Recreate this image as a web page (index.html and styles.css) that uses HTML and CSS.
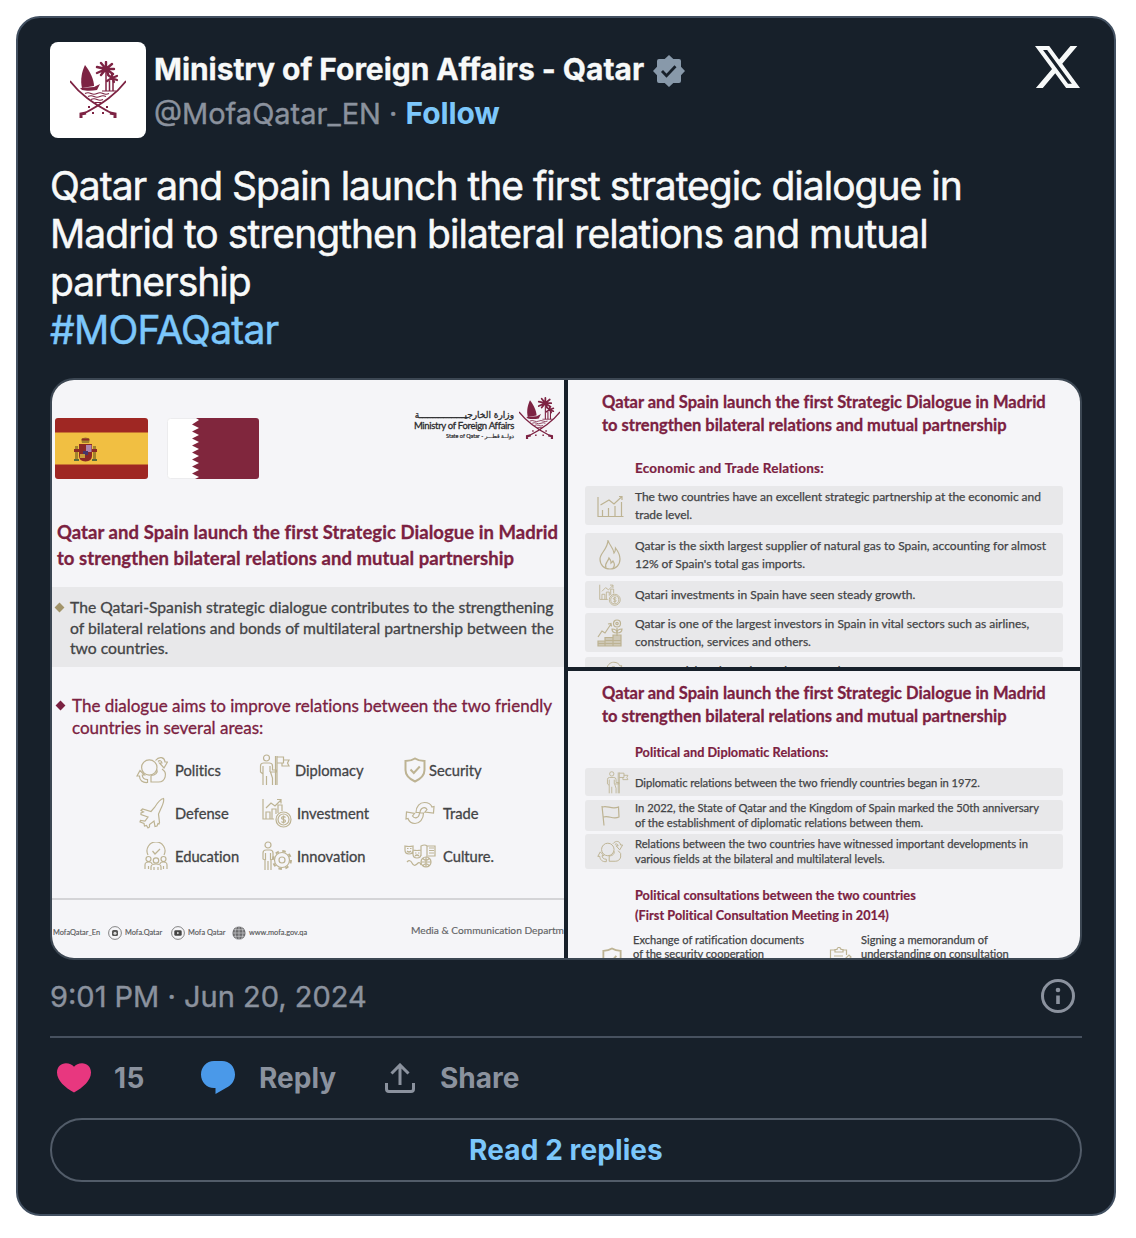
FILE: index.html
```
<!DOCTYPE html>
<html lang="en">
<head>
    <meta charset="UTF-8">
    <meta name="viewport" content="width=device-width, initial-scale=1.0">
    <title>Ministry of Foreign Affairs - Qatar</title>
    <link rel="stylesheet" href="styles.css">
</head>
<body>

<!-- shared icons -->
<svg class="sprite" aria-hidden="true">
    <symbol id="emblem" viewBox="0 0 56 58">
        <path fill="#7d2343" d="M15 4c5 6 9 15 9 21l-12 2c-2-8 0-17 3-23z"/>
        <path fill="#7d2343" d="M10 27l14-1 6-3-3 6c-5 1-11 1-15 0z"/>
        <path fill="none" stroke="#7d2343" stroke-width="2.400" stroke-linecap="round" d="M36 8l-9 4M36 8l-9-2M36 8l-5-6M36 8V1M36 8l6-5M36 8l8 0M36 8l7 5M36 8l-5 6M36 8l2 5"/>
        <path fill="none" stroke="#7d2343" stroke-width="1.500" d="M36 10v20M43 20v10M39.500 20v10"/>
        <path fill="none" stroke="#7d2343" stroke-width="2.200" stroke-linecap="round" d="M42 17l-5 3M42 17l-4-3M42 17v-4M42 17l5-2M42 17l5 2M42 17l2 4"/>
        <path fill="none" stroke="#7d2343" stroke-width="1.100" d="M32 30h14M15 32.500q3-1.500 6 0t6 0 6 0 6 0M18 35.500q3-1.500 6 0t6 0 6 0M21 38.500q3-1.500 6 0t6 0M25 41.500h6"/>
        <path fill="none" stroke="#7d2343" stroke-width="1.700" d="M0 20c10 13 22 22 43 33M56 20C46 33 34 42 13 53"/>
        <path fill="none" stroke="#7d2343" stroke-width="3" d="M40 52l5 1v4M16 52l-5 1v4"/>
        <path fill="#7d2343" d="M18 45h2v2h-2zM36 45h2v2h-2zM22 51h2v2h-2zM32 51h2v2h-2z"/>
    </symbol>
    <symbol id="politics" viewBox="0 0 32 28">
        <circle cx="13.300" cy="11.500" r="7.700"/>
        <path d="M15 19.500v6.500h7.500a7 7 0 0 0 3.500-13M20.800 13.500c1.500 3-1.500 6-5.800 6"/>
        <path d="M19.500 4.500c4-5 9-3 9.500 1.500h2.500l-3.500 6-4.500-5H26c-.5-2.500-2.500-3-4-1.500M1 20l3-5.500L8.500 19H6.300c0 3 2 4.500 5.200 4.500V26.500C6.500 27 3.500 24 3.500 20z"/>
    </symbol>
    <symbol id="diplomacy" viewBox="0 0 31 32">
        <circle cx="7.500" cy="4" r="3"/>
        <path d="M4 31V20l-2.500-2v-6q0-3 3-3h6q3 0 3 3v4h4v2h-6l2 6v7M4 12v8M7.500 31v-9M11 12v6M16.500 2v29M18 2v29M18 3h6.500v6H18M24.500 6H30l-1.500 3 1.500 3h-7V9"/>
    </symbol>
    <symbol id="shield" viewBox="0 0 22 26">
        <path stroke-width="2" d="M11 1.500c3 2 6 2.500 9.500 2.500v9c0 6-4 9-9.500 11.500C5.500 22 1.500 19 1.500 13V4C5 4 8 3.500 11 1.500z"/>
        <path stroke-width="2" d="M6.500 12.500l3.300 3.500 6-6.500"/>
    </symbol>
    <symbol id="defense" viewBox="0 0 26 32">
        <path d="M24.500 1.500c-3 .5-6 4-9 9L12 14.500 3.500 12 2 13.500 4.500 15l-2.500 1v1.500l7 2.500-3 4-4.500-.5L1 25l4 1.500L5.500 29l2-.5L9 31l1.500-1v-2.500L15 24l1 5.500 2-.5 1-2.500 1 .5.500-1.500L19.500 17l2-4.500c2-4 4-8 3-11z"/>
    </symbol>
    <symbol id="investment" viewBox="0 0 30 30">
        <path d="M1 1v20h11M4 21v-7h4v7M10 21V11h4v5M16 15V7h4v6M4 10l5-5 4 3 6-6M15 1.500h4v4"/>
        <circle cx="21.500" cy="21.500" r="7.500"/><circle cx="21.500" cy="21.500" r="5.500"/>
        <path d="M23.500 19.500c-1-1.500-4-1-4 .5 0 2 4 1 4 3 0 1.500-3 2-4 .5M21.500 17.500v8"/>
    </symbol>
    <symbol id="trade" viewBox="0 0 30 24">
        <path d="M11 11.500C11 5 15 1.500 19.500 1.500c4 0 6.500 2 7.500 4.500l2-.5-.5 6.500L20 11l2-2.500C20.500 5.500 15.500 6 15 11.500zM18.500 12c0 6.500-4 10.500-8.500 10.500-4 0-6-2-7-5l-2 .500L1.500 11l8 1.500-2 2.500c2 3 6.500 2.500 7-3z"/>
    </symbol>
    <symbol id="education" viewBox="0 0 24 28">
        <path d="M4 13a9 9 0 1 1 16 0M8.500 9l2.500 3 5-5"/>
        <circle cx="4.500" cy="17" r="2.500"/><circle cx="19.500" cy="17" r="2.500"/><circle cx="12" cy="18.500" r="2.700"/>
        <path d="M1 27v-4q0-3 3.500-3T8 22M23 27v-4q0-3-3.500-3T16 22M7 28v-3q0-3 5-3t5 3v3M4.500 27v-3M19.500 27v-3M10 28v-3M14 28v-3"/>
    </symbol>
    <symbol id="innovation" viewBox="0 0 30 30">
        <circle cx="6" cy="4" r="3"/>
        <path d="M3 29V19l-2-1v-6q0-3 3-3h4q3 0 3 3v6l-2 1v10M6 20v9M3.500 12v7M8.500 12v7"/>
        <circle cx="20" cy="19" r="3"/>
        <circle cx="20" cy="19" r="7.500"/>
        <circle cx="20" cy="19" r="9" stroke-dasharray="3.500 3.570" stroke-width="2"/>
    </symbol>
    <symbol id="culture" viewBox="0 0 32 24">
        <path d="M1 2q4 1 8 0v4q0 4-4 4T1 6zM9 6q4 1 8 0v4q0 4-4 4T9 10zM3 4.500h1.500M6 4.500h1.500M3 7q2 2 4 0M11 9h1.500M14 9h1.500M11 12q2-2 4 0M17 12V2q4-2 6 0v11M23 2h8v10h-7M25 4h5M25 6.500h5M25 9h5M3 18q3-3 5 1t5 1 4 1"/>
        <circle cx="22" cy="18" r="5"/><path d="M17 18h10M22 13v10M19 14.500q3 3.500 6 0M19 21.500q3-3.500 6 0"/>
    </symbol>
    <symbol id="chart" viewBox="0 0 27 22">
        <path d="M1 2v19.500h25.500M5.500 21v-6M11.500 21v-8M18 21V11M24.500 21V7M3.500 10l8.500-5 5 4 8-7.500M22 1.500h3V5"/>
    </symbol>
    <symbol id="flame" viewBox="0 0 22 31">
        <path d="M9 1c1 5 5 7 6 13 1-1 1.500-3 1.500-5 3 4 4.500 7 4.500 11 0 6-4 10-10 10S1 26 1 20C1 14 9 10 9 1z"/>
        <path d="M7 29c-2-5 2-6 3-10 2 2 2 3 2 5l2-2c2 3 2 5 0 7"/>
    </symbol>
    <symbol id="growth" viewBox="0 0 26 28">
        <path d="M1 18l4-6 3 2 6-9M11 5l3-.5.500 3M20 17v-8M20 14q-5 0-5-4 5 0 5 4M20 14q5 0 5-4-5 0-5 4"/>
        <circle cx="20" cy="4.500" r="3.500"/><circle cx="20" cy="4.500" r="1.200"/>
        <path fill="#bdb393" fill-opacity=".6" d="M1 22h7v5H1zM8 18.500h8V27H8zM16 16h8v11h-8zM1 24.500h23M8 21.500h16"/>
    </symbol>
    <symbol id="flag" viewBox="0 0 19 21">
        <path d="M1 1l2 19.500M1.500 2c5-2 9 3 16 0l.5 10c-6 3-10-2-15.500 0"/>
    </symbol>
    <symbol id="clipboard" viewBox="0 0 23 24">
        <path d="M6 3H1.500v20h16V16M6 5h8V2.500h-2a2 2 0 0 0-4 0H6zM14 3h3.500v5M5 9h9M5 12h7M11 17l9-9 2 2-9 9z"/>
    </symbol>
</svg>

<article class="tweet">
    <header class="tweet-header">
        <div class="avatar">
            <svg width="56" height="58"><use href="#emblem"/></svg>
        </div>
        <div class="author">
            <div class="author-name">
                Ministry of Foreign Affairs - Qatar
                <svg class="verified" viewBox="0 0 32 32" width="32" height="32">
                    <path fill="#8899aa" d="M16 0l4.300 4H26q2 0 2 2v5.700l4 4.300-4 4.300V26q0 2-2 2h-5.700L16 32l-4.300-4H6q-2 0-2-2v-5.700L0 16l4-4.300V6q0-2 2-2h5.700z"/>
                    <path fill="none" stroke="#17202a" stroke-width="2.800" d="M9 16l4.500 4.700 9-9.400"/>
                </svg>
            </div>
            <div class="author-handle"><span class="handle">@MofaQatar_EN</span> <span class="dot">·</span> <a class="follow">Follow</a></div>
        </div>
        <svg class="x-logo" viewBox="1.254 2.250 21.573 19.500" width="45" height="42" preserveAspectRatio="none">
            <path fill="#f7f9f9" d="M18.244 2.250h3.308l-7.227 8.260 8.502 11.240H16.170l-5.214-6.817L4.990 21.750H1.680l7.730-8.835L1.254 2.250H8.080l4.713 6.231zm-1.161 17.520h1.833L7.084 4.126H5.117z"/>
        </svg>
    </header>

    <div class="tweet-text">
        Qatar and Spain launch the first strategic dialogue in<br>
        <span class="second-line">Madrid to strengthen bilateral relations and mutual</span><br>
        partnership<br>
        <a class="hashtag">#MOFAQatar</a>
    </div>

    <div class="media">
        <!-- left picture -->
        <section class="slide slide-main">
            <div class="slide-top">
                <svg class="country" viewBox="0 0 93 61" width="93" height="61">
                    <rect width="93" height="61" rx="3" fill="#9f2723"/>
                    <path fill="#f1bf42" d="M0 14.500h93v32H0z"/>
                    <path fill="#a3832c" d="M20 28h3v15h-3zM38 28h3v15h-3zM26 21q4.500-3 9 0l-1 4h-7z"/>
                    <path fill="#8c2a26" d="M24 26h13v12q0 5-6.500 5.500Q24 43 24 38zM19 31h5v3h-5zM37 31h5v3h-5zM27 20.500h7v2h-7z"/>
                    <path fill="#ad86ae" d="M31 27h5.500v7H31z"/>
                    <path fill="#47376b" d="M28 33h5v4h-5z"/>
                    <path fill="#c99b3a" d="M25 36h5v4h-5z"/>
                    <path fill="#5a6a3c" d="M19 41h5v2h-5zM37 41h5v2h-5z"/>
                </svg>
                <svg class="country" viewBox="0 0 93 61" width="93" height="61">
                    <rect x=".5" y=".5" width="91" height="60" rx="3" fill="#fff" stroke="#ececee"/>
                    <path fill="#80263d" d="M29 0h60q3 0 3 3v55q0 3-3 3H28l4-2-7-3.500 7-3.500-7-3.500 7-3.500-7-3.500 7-3.500-7-3.500 7-3.500-7-3.500 7-3.500-7-3.500 7-3.500-7-3.500 7-3.500-7-3.500L32 2z"/>
                </svg>
                <div class="ministry">
                    <div class="ministry-ar" lang="ar" dir="rtl">وزارة الخارجيـــــــــــــــــة</div>
                    <div class="ministry-en">Ministry of Foreign Affairs</div>
                    <div class="ministry-state">State of Qatar - <span lang="ar" dir="rtl">دولــة قطـــر</span></div>
                </div>
                <svg class="ministry-logo" width="41" height="43"><use href="#emblem"/></svg>
            </div>

            <h2 class="main-title">Qatar and Spain launch the first Strategic Dialogue in Madrid<br>to strengthen bilateral relations and mutual partnership</h2>

            <div class="band">
                <span class="diamond"></span>
                <p>The Qatari-Spanish strategic dialogue contributes to the strengthening<br>of bilateral relations and bonds of multilateral partnership between the<br>two countries.</p>
            </div>

            <div class="aims">
                <span class="diamond"></span>
                <p>The dialogue aims to improve relations between the two friendly<br>countries in several areas:</p>
            </div>

            <div class="areas">
                <div class="area"><svg class="icon" width="32" height="28"><use href="#politics"/></svg>Politics</div>
                <div class="area area-diplomacy"><svg class="icon" width="31" height="32"><use href="#diplomacy"/></svg>Diplomacy</div>
                <div class="area area-security"><svg class="icon" width="22" height="26"><use href="#shield"/></svg>Security</div>
                <div class="area"><svg class="icon" width="26" height="32"><use href="#defense"/></svg>Defense</div>
                <div class="area area-wide"><svg class="icon" width="30" height="30"><use href="#investment"/></svg>Investment</div>
                <div class="area"><svg class="icon" width="30" height="24"><use href="#trade"/></svg>Trade</div>
                <div class="area area-education"><svg class="icon" width="24" height="28"><use href="#education"/></svg>Education</div>
                <div class="area area-wide"><svg class="icon" width="30" height="30"><use href="#innovation"/></svg>Innovation</div>
                <div class="area"><svg class="icon" width="32" height="24"><use href="#culture"/></svg>Culture.</div>
            </div>

            <div class="slide-footer">
                <span class="social first">MofaQatar_En</span>
                <span class="social second">
                    <svg width="14" height="14" viewBox="0 0 14 14"><circle cx="7" cy="7" r="6.400" fill="none" stroke="#666" stroke-width=".8"/><rect x="4" y="4" width="6" height="6" rx="1.500" fill="#555"/><circle cx="7" cy="7.200" r="1.500" fill="#ddd"/></svg>
                    Mofa.Qatar
                </span>
                <span class="social third">
                    <svg width="14" height="14" viewBox="0 0 14 14"><circle cx="7" cy="7" r="6.400" fill="none" stroke="#666" stroke-width=".8"/><rect x="3.300" y="4.300" width="7.400" height="5.400" rx="1.300" fill="#444"/><path fill="#eee" d="M6.200 5.800l2.200 1.200-2.200 1.200z"/></svg>
                    Mofa Qatar
                </span>
                <span class="social">
                    <svg width="14" height="14" viewBox="0 0 14 14"><circle cx="7" cy="7" r="6.600" fill="#6b6b6d"/><path fill="none" stroke="#d5d5d7" stroke-width=".6" d="M0 7h14M1.500 3.700h11M1.500 10.300h11M7 0v14M5 0q-4 7 0 14M9 0q4 7 0 14"/></svg>
                    www.mofa.gov.qa
                </span>
                <span class="department">Media &amp; Communication Departm</span>
            </div>
        </section>

        <!-- right column -->
        <div class="media-side">
            <section class="slide slide-economy">
                <h3 class="side-title">Qatar and Spain launch the first Strategic Dialogue in Madrid<br>to strengthen bilateral relations and mutual partnership</h3>
                <h4 class="side-heading">Economic and Trade Relations:</h4>
                <div class="fact fact-tall"><div class="fact-icon"><svg class="icon" width="27" height="22"><use href="#chart"/></svg></div><p class="tight">The two countries have an excellent strategic partnership at the economic and<br>trade level.</p></div>
                <div class="fact fact-gas"><div class="fact-icon"><svg class="icon" width="22" height="31"><use href="#flame"/></svg></div><p>Qatar is the sixth largest supplier of natural gas to Spain, accounting for almost<br>12% of Spain's total gas imports.</p></div>
                <div class="fact fact-short"><div class="fact-icon"><svg class="icon" width="22" height="22"><use href="#investment"/></svg></div><p>Qatari investments in Spain have seen steady growth.</p></div>
                <div class="fact fact-tall fact-growth"><div class="fact-icon"><svg class="icon" width="26" height="28"><use href="#growth"/></svg></div><p>Qatar is one of the largest investors in Spain in vital sectors such as airlines,<br>construction, services and others.</p></div>
                <div class="fact fact-short"><div class="fact-icon"><svg class="icon" width="26" height="20"><use href="#trade"/></svg></div><p>Commercial trade Exchange between the two States</p></div>
            </section>
            <section class="slide slide-politics">
                <h3 class="side-title">Qatar and Spain launch the first Strategic Dialogue in Madrid<br>to strengthen bilateral relations and mutual partnership</h3>
                <h4 class="side-heading">Political and Diplomatic Relations:</h4>
                <div class="fact fact-began"><div class="fact-icon"><svg class="icon" width="23" height="23"><use href="#diplomacy"/></svg></div><p>Diplomatic relations between the two friendly countries began in 1972.</p></div>
                <div class="fact fact-marked"><div class="fact-icon"><svg class="icon" width="19" height="21"><use href="#flag"/></svg></div><p>In 2022, the State of Qatar and the Kingdom of Spain marked the 50th anniversary<br>of the establishment of diplomatic relations between them.</p></div>
                <div class="fact fact-witnessed"><div class="fact-icon"><svg class="icon" width="26" height="23"><use href="#politics"/></svg></div><p>Relations between the two countries have witnessed important developments in<br>various fields at the bilateral and multilateral levels.</p></div>
                <h4 class="side-heading consultations">Political consultations between the two countries<br>(First Political Consultation Meeting in 2014)</h4>
                <div class="documents">
                    <div class="document"><svg class="icon" width="20" height="24"><use href="#shield"/></svg><p>Exchange of ratification documents<br>of the security cooperation</p></div>
                    <div class="document"><svg class="icon" width="23" height="24"><use href="#clipboard"/></svg><p>Signing a memorandum of<br>understanding on consultation</p></div>
                </div>
            </section>
        </div>
    </div>

    <div class="tweet-meta">
        <time>9:01 PM · Jun 20, 2024</time>
        <svg class="info" width="34" height="34" viewBox="0 0 34 34">
            <circle cx="17" cy="17" r="15.500" fill="none" stroke="#8b929e" stroke-width="3"/>
            <circle cx="17" cy="11" r="2.300" fill="#8b929e"/>
            <path fill="#8b929e" d="M15.200 16.500h3.600v8.500h-3.600z"/>
        </svg>
    </div>

    <div class="actions">
        <a class="action like">
            <svg width="34" height="30" viewBox="0 0 34 30"><path fill="#e8377f" d="M17 29.500C8 24.500 0 17.500 0 9.500 0 4 4 .3 9 .3c3.500 0 6 1.200 8 3.500 2-2.300 4.500-3.500 8-3.500 5 0 9 3.700 9 9.200 0 8-8 15-17 20z"/></svg>
            15
        </a>
        <a class="action reply">
            <svg width="34" height="33" viewBox="0 0 34 33"><path fill="#4a99e9" d="M13 0h8c7.500 0 13 5.800 13 13.500 0 5-2.500 9.500-6.500 12L14.500 33v-6H13C5.500 27 0 21 0 13.500S5.500 0 13 0z"/></svg>
            Reply
        </a>
        <a class="action share">
            <svg width="30" height="30" viewBox="0 0 30 30"><path fill="none" stroke="#8b929e" stroke-width="3" d="M15 22V2.500M6.500 10.500L15 2l8.500 8.500M1.500 20v6q0 2.500 2.500 2.500h22q2.500 0 2.500-2.500v-6"/></svg>
            Share
        </a>
    </div>

    <a class="read-replies">Read 2 replies</a>
</article>

</body>
</html>
```
FILE: styles.css
```
* {
    box-sizing: border-box;
}

body {
    margin: 0;
    padding: 16px;
    background-color: #fff;
    font-family: Inter, "Liberation Sans", sans-serif;
}

h2, h3, h4, p {
    margin: 0;
    white-space: nowrap;
}

svg {
    display: block;
    flex-shrink: 0;
}

.sprite {
    display: none;
}

.tweet {
    width: 1100px;
    height: 1200px;
    padding: 24px 32px;
    border: 2px solid #425061;
    border-radius: 24px;
    background-color: #17202a;
    color: #f7f9f9;
}

/* header */
.tweet-header {
    display: flex;
    height: 96px;
}

.avatar {
    display: flex;
    align-items: center;
    justify-content: center;
    width: 96px;
    height: 96px;
    border-radius: 8px;
    background-color: #fff;
}

.author {
    flex: 1;
    padding: 5px 0 0 8px;
}

.author-name {
    display: flex;
    align-items: center;
    gap: 9px;
    height: 44px;
    font-size: 30px;
    font-weight: 700;
    letter-spacing: -0.05px;
    -webkit-text-stroke: 0.3px #f7f9f9;
}

.verified {
    margin-top: 3px;
}

.author-handle {
    height: 44px;
    line-height: 44px;
    font-size: 29px;
    color: #8b929e;
    -webkit-text-stroke: 0.4px #8b929e;
}

.follow {
    font-size: 30px;
    font-weight: 700;
    letter-spacing: -0.15px;
    color: #7cc7fb;
    -webkit-text-stroke: 0;
}

.x-logo {
    margin: 4px 2px 0 0;
}

/* text */
.tweet-text {
    margin-top: 24px;
    line-height: 48px;
    font-size: 39px;
    letter-spacing: -1px;
    white-space: nowrap;
    -webkit-text-stroke: 0.5px #f7f9f9;
}

.second-line {
    letter-spacing: -0.95px;
}

.hashtag {
    letter-spacing: -0.75px;
    color: #7cc7fb;
    -webkit-text-stroke: 0.5px #7cc7fb;
}

/* media grid */
.media {
    display: flex;
    gap: 4px;
    height: 582px;
    margin-top: 24px;
    border: 2px solid #3c4753;
    border-radius: 24px;
    overflow: hidden;
    font-family: Lato, "Noto Sans", sans-serif;
    font-variant-ligatures: no-common-ligatures;
    color: #434446;
}

.slide {
    background-color: #f5f5f8;
    overflow: hidden;
}

.slide-main {
    width: 512px;
}

.media-side {
    display: flex;
    flex-direction: column;
    gap: 4px;
    width: 512px;
}

.media-side .slide {
    height: 287px;
}

.icon {
    fill: none;
    stroke: #bdb393;
    stroke-width: 1.2;
}

/* left picture */
.slide-top {
    display: flex;
    height: 139px;
    padding: 17px 4px 0 3px;
}

.country {
    margin: 21px 19px 0 0;
}

.ministry {
    flex: 1;
    margin-top: 13px;
    text-align: right;
    white-space: nowrap;
    color: #2b2b2d;
}

.ministry-ar {
    display: flex;
    height: 10px;
    line-height: 10px;
    font-family: "DejaVu Sans", sans-serif;
    font-size: 9px;
    -webkit-text-stroke: 0.3px #2b2b2d;
}

.ministry-en {
    height: 12px;
    line-height: 12px;
    font-size: 9.5px;
    letter-spacing: -0.3px;
    -webkit-text-stroke: 0.3px #2b2b2d;
}

.ministry-state {
    height: 8px;
    line-height: 8px;
    font-family: Lato, "DejaVu Sans", sans-serif;
    font-size: 5.5px;
    -webkit-text-stroke: 0.2px #2b2b2d;
}

.ministry-logo {
    margin-left: 5px;
}

.main-title {
    padding-left: 5px;
    line-height: 26px;
    font-size: 18.5px;
    font-weight: 700;
    letter-spacing: 0.06px;
    color: #7b2141;
    -webkit-text-stroke: 0.3px #7b2141;
}

.band {
    display: flex;
    height: 80px;
    margin-top: 16px;
    padding: 10px 0 0 4px;
    background-color: #e8e8ea;
    line-height: 20.7px;
    font-size: 15.7px;
    -webkit-text-stroke: 0.3px #434446;
}

.diamond {
    width: 7px;
    height: 7px;
    margin: 7px 7px 0 0;
    transform: rotate(45deg);
    background-color: #a2946a;
}

.aims {
    display: flex;
    margin-top: 28px;
    padding-left: 5px;
    line-height: 22px;
    font-size: 17px;
    color: #7b2141;
    -webkit-text-stroke: 0.3px #7b2141;
}

.aims .diamond {
    margin-right: 8px;
    background-color: #7b2141;
}

.areas {
    display: grid;
    grid-template-columns: 123px 145px 110px;
    grid-auto-rows: 43px;
    margin-top: 9px;
    padding-left: 84px;
}

.area {
    display: grid;
    grid-template-columns: 39px auto;
    align-items: center;
    justify-content: start;
    font-size: 14.7px;
    -webkit-text-stroke: 0.3px #434446;
}

.area .icon {
    justify-self: center;
    margin-right: 8px;
}

.area-diplomacy {
    grid-template-columns: 36px auto;
}

.area-diplomacy .icon {
    margin-right: 5px;
}

.area-security {
    grid-template-columns: 25px auto;
}

.area-security .icon {
    margin-right: 4px;
}

.area-wide {
    grid-template-columns: 38px auto;
}

.area-wide .icon {
    margin-right: 3px;
}

.area-education .icon {
    margin-right: 0;
}

.slide-footer {
    display: flex;
    align-items: center;
    height: 60px;
    margin-top: 21px;
    padding: 7px 0 0 1px;
    border-top: 2px solid #d4d4d7;
    font-size: 7.4px;
    white-space: nowrap;
    color: #58595b;
    -webkit-text-stroke: 0.15px #58595b;
}

.social {
    display: flex;
    align-items: center;
    gap: 3px;
}

.first {
    width: 55px;
}

.second {
    width: 63px;
}

.third {
    width: 61px;
}

.department {
    margin: -5px 0 0 auto;
    font-size: 10.2px;
    color: #66676a;
}

/* right pictures */
.side-title {
    padding: 11px 0 0 34px;
    line-height: 23px;
    font-size: 16.5px;
    font-weight: 700;
    color: #7b2141;
    -webkit-text-stroke: 0.3px #7b2141;
}

.side-heading {
    padding-left: 67px;
    line-height: 20px;
    font-size: 13px;
    font-weight: 700;
    color: #7b2141;
    -webkit-text-stroke: 0.2px #7b2141;
}

.slide-economy .side-heading {
    margin: 21px 0 8px;
    font-size: 13.5px;
    letter-spacing: 0.24px;
}

.fact {
    display: flex;
    align-items: center;
    width: 478px;
    margin-left: 17px;
    border-radius: 3px;
    background-color: #e8e8ea;
    -webkit-text-stroke: 0.25px #434446;
}

.fact-icon {
    display: flex;
    justify-content: center;
    width: 50px;
}

.slide-economy .fact {
    line-height: 18.5px;
    font-size: 12px;
}

.slide-economy .fact p {
    padding-top: 1px;
}

.fact .tight {
    letter-spacing: -0.06px;
}

.slide-economy .fact-tall {
    height: 39px;
    margin-bottom: 8px;
}

.slide-economy .fact-growth {
    margin-bottom: 5px;
}

.slide-economy .fact-gas {
    height: 43px;
    margin-bottom: 5px;
}

.slide-economy .fact-short {
    height: 27px;
    margin-bottom: 5px;
}

.slide-politics .side-heading {
    margin: 14px 0 6px;
    font-size: 12.7px;
    letter-spacing: 0.05px;
}

.slide-politics .fact {
    line-height: 14.5px;
    font-size: 11.2px;
}

.slide-politics .fact-began {
    height: 28px;
    margin-bottom: 4px;
}

.fact-began .fact-icon {
    padding-right: 0;
    padding-left: 14px;
}

.fact-began p {
    padding-top: 3px;
    letter-spacing: -0.06px;
}

.slide-politics .fact-marked {
    height: 31px;
    margin-bottom: 3px;
}

.slide-politics .fact-witnessed {
    height: 35px;
}

.slide-politics .consultations {
    margin: 16px 0 8px;
}

.documents {
    display: grid;
    grid-template-columns: 227px auto;
    padding-left: 34px;
}

.document {
    display: flex;
    gap: 11px;
    line-height: 14px;
    font-size: 11.1px;
    -webkit-text-stroke: 0.25px #434446;
}

.document .icon {
    margin-top: 14px;
}

.document + .document {
    gap: 9px;
}

/* date row */
.tweet-meta {
    display: flex;
    align-items: center;
    justify-content: space-between;
    height: 78px;
    padding: 0 7px 4px 0;
    border-bottom: 2px solid #47515f;
    font-size: 29px;
    color: #8b929e;
}

.tweet-meta time {
    padding-top: 1px;
    -webkit-text-stroke: 0.4px #8b929e;
}

/* actions */
.actions {
    display: flex;
    height: 80px;
    padding-left: 7px;
    font-size: 28px;
    font-weight: 700;
    color: #8b929e;
}

.action {
    display: flex;
    align-items: center;
    gap: 24px;
}

.like {
    gap: 23px;
    width: 144px;
    letter-spacing: 0.5px;
}

.reply {
    width: 184px;
}

.reply svg {
    margin-top: -2px;
}

.share {
    gap: 25px;
}

.read-replies {
    display: flex;
    align-items: center;
    justify-content: center;
    height: 64px;
    border: 2px solid #525c69;
    border-radius: 32px;
    font-size: 28px;
    font-weight: 700;
    letter-spacing: 0.1px;
    color: #7cc7fb;
}
```
